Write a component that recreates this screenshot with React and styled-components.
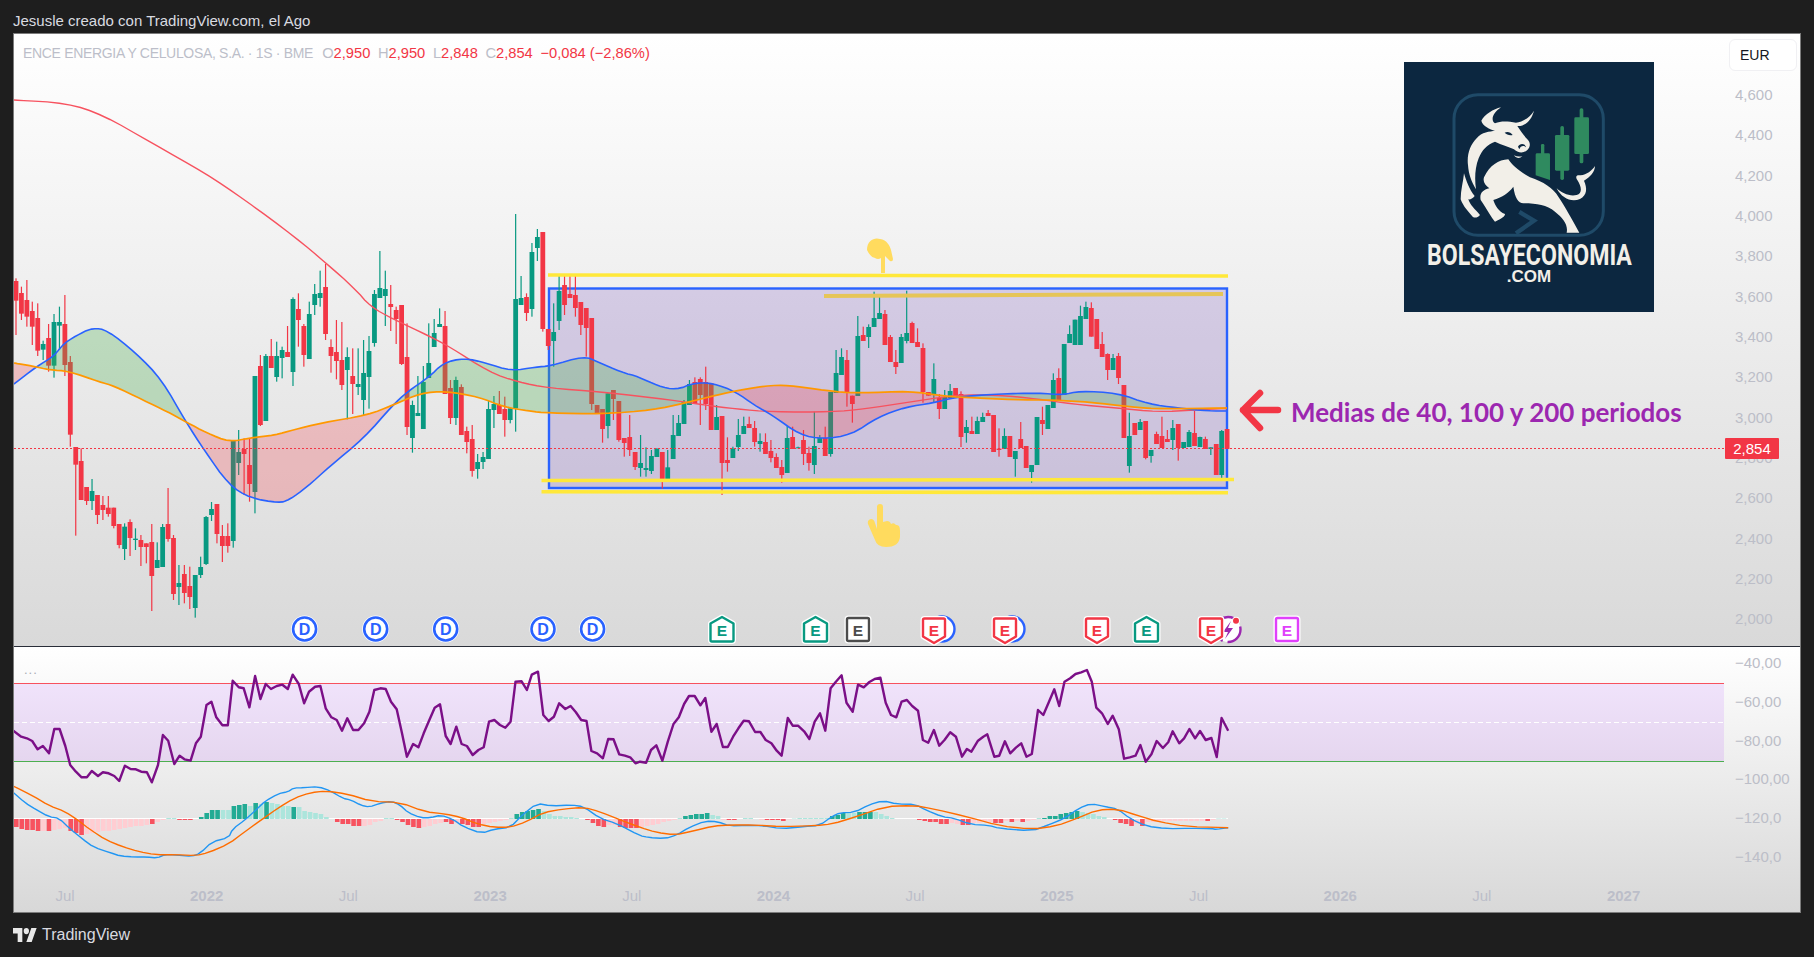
import React from 'react';
import styled, { createGlobalStyle } from 'styled-components';

const FONT = '"Liberation Sans", Arial, sans-serif';

const Global = createGlobalStyle`
  html, body { margin: 0; padding: 0; background: #1e1e1e; }
  body { font-family: ${FONT}; overflow: hidden; }
`;

const Page = styled.div`
  width: 1814px; height: 957px; background: #1e1e1e;
  display: flex; flex-direction: column;
`;
const TopBar = styled.div`
  height: 33px; padding-left: 13px; display: flex; align-items: center; padding-top: 7px; box-sizing: border-box;
  color: #d9dbe0; font-size: 15px;
`;
const Frame = styled.div`
  position: relative; width: 1788px; margin-left: 13px; height: 880px; box-sizing: border-box;
  border: 1px solid #7c7c7c; display: flex; flex-direction: column;
`;
const PriceRow = styled.div`
  position: relative; height: 612px; display: flex;
  background: linear-gradient(#ffffff, #d9d9d9);
`;
const Divider = styled.div` height: 1px; background: #2a2e39; `;
const LowerRow = styled.div`
  height: 265px; display: flex;
  background: linear-gradient(#ffffff, #d8d8d8);
`;
const PlotColumn = styled.div` width: 1710px; display: flex; flex-direction: column; `;
const PlotSvg = styled.svg` display: block; width: 1710px; height: ${p => p.$h}px; `;
const PriceAxis = styled.div`
  width: 76px; padding-top: 5px; box-sizing: border-box; display: flex; flex-direction: column; gap: 20.35px;
`;
const CurrencyBox = styled.div`
  width: 68px; height: 32px; margin-left: 5px; margin-bottom: -6.35px; box-sizing: border-box;
  background: #fff; border: 1px solid #f0f0f3; border-radius: 6px; padding-left: 10px;
  display: flex; align-items: center; color: #131722; font-size: 14px;
`;
const Tick = styled.div`
  height: 20px; line-height: 20px; padding-left: 11px; color: #bcbec8; font-size: 15px; white-space: nowrap;
`;
const OscAxis = styled(PriceAxis)` padding-top: 6px; gap: 18.8px; `;
const TimeAxis = styled.div`
  height: 31px; display: grid; grid-template-columns: repeat(12, 141.7px); margin-left: -19.85px;
`;
const TimeLabel = styled.div`
  text-align: center; line-height: 30px; color: #bcbec9; font-size: 15px;
  font-weight: ${p => (p.$year ? 700 : 400)};
`;
const Legend = styled.div`
  position: absolute; left: 9px; top: 10px; display: flex; align-items: baseline; white-space: nowrap; line-height: 18px; color: #bcbec9;
`;
const LegendTitle = styled.span` font-size: 14px; letter-spacing: -0.32px; `;
const LegendValues = styled.span` margin-left: 9px; font-size: 14.7px; `;
const LegendPair = styled.span` margin-right: 7.6px; `;
const Red = styled.span` color: #f23645; `;
const Annotation = styled.div`
  position: absolute; left: 1277px; top: 361px; color: #9c27b0; font: 700 26px/34px Lato, sans-serif; white-space: nowrap;
`;
const LastPrice = styled.div`
  position: absolute; left: 1711px; top: 404px; width: 54px; height: 21px; background: #f23645; border-radius: 1px;
  color: #fff; font-size: 15px; line-height: 21px; text-align: center;
`;
const LogoBox = styled.div`
  position: absolute; left: 1390px; top: 28px; width: 250px; height: 250px; background: #0c2740;
  display: flex; flex-direction: column; align-items: center; padding-top: 182px; box-sizing: border-box;
`;
const LogoSvg = styled.svg` position: absolute; left: 0; top: 0; width: 250px; height: 250px; display: block; `;
const LogoName = styled.div`
  height: 23px; font: 700 29px/23px Roboto, sans-serif; color: #f2efe8; white-space: nowrap;
  transform: scaleX(0.797); transform-origin: center; position: relative;
`;
const LogoDomain = styled.div`
  height: 13px; margin-top: 3px; font: 700 17px/13px "Liberation Sans", sans-serif; color: #f2efe8; white-space: nowrap; position: relative;
`;
const Dots = styled.div`
  position: absolute; left: 10px; top: 18px; color: #a8abb5; font-size: 13px; letter-spacing: 1px; line-height: 10px;
`;
const Lower = styled.div` position: relative; display: flex; `;
const Footer = styled.div`
  height: 44px; padding-left: 13px; display: flex; align-items: center; gap: 5px; color: #d9dbe0; font-size: 16px;
`;
const LetterText = styled.text`
  font-family: ${FONT}; font-weight: 700; font-size: ${p => p.$s || 15}px; text-anchor: middle; fill: ${p => p.$c};
`;

const C1 = `r 85 93 152 255|r 110 129 191 210|r 90 150 200 230|r 155 183 230 285|r 160 204 302 318|g 272 282 299 330|r 222 264 347 365|g 192 216 347 383|g 170 216 227 300|r 135 222 345 378|r 318 336 554 590|r 591 591 644 857|r 595 633 750 750|r 711 711 753 765|g 687 723 753 780|r 735 735 795 822|r 738 765 780 810|r 738 773 792 800|r 773 773 828 835|r 822 822 885 895|g 820 830 897 930|r 808 816 864 918|g 835 866 870 900|r 855 870 891 948|r 880 880 891 940|r 822 876 978 1083|g 877 930 954 954|g 822 831 951 951|r 714 822 867 875|r 855 864 1032 1050|g 945 999 1011 1065|r 945 972 1029 1060|r 950 1008 1041 1077|g 975 975 1074 1103|g 920 951 975 984|g 798 801 942 945|g 756 777 795 813|r 762 762 852 880|r 825 858 888 936|r 820 858 888 908|g 570 570 873 893|g 540 606 639 675|r 565 597 612 735|r 565 645 702 755|g 408 378 726 790|r 315 348 525 528|g 312 318 513 513|r 267 318 354 354|g 275 318 381 395|g 290 300 324 385|r 228 306 321 321|g 142 147 366 408|r 130 177 210 290|r 222 228 315 350|g 155 192 327 327|g 102 132 165 195|g 62 129 144 170|r 42 111 252 270|r 268 291 318 368|r 210 306 333 388|r 216 330 405 420|g 292 321 360 508|r 295 378 402 492|g 295 402 411 435|g 270 369 450 495|g 258 303 381 476|g 120 132 279 290|g 3 114 144 144|g 62 117 138 228|r 105 162 171 243|r 170 180 207 282|r 165 165 342 345|r 220 321 531 555|g 452 465 564 608|g 378 489 498 498|g 348 396 537 537|g 220 339 384 384|g 207 249 291 291|g 175 222 231 231|r 183 228 432 432|r 390 414 504 522|g 380 390 504 525|r 403 411 555 555|r 530 543 576 610|r 525 567 663 680|g 612 636 657 686|g 606 621 636 657|g 452 477 627 627|g 438 462 480 534|r 423 465 492 492|r 440 477 510 560|g 475 475 510 520|g -108 147 475 545|g 78 144 165 165|r 130 141 189 213|g -21 6 177 200|g -63 -39 -6 33|r -54 -54 237 245|r 237 237 288 300|g 160 246 273 350`;
const C2 = `g 165 213 303 330|r 168 195 255 285|r 165 222 234 234|r 165 225 264 290|r 246 246 315 345|r 264 264 324 410|r 294 294 552 570|r 555 555 580 580|r 567 567 627 668|g 520 520 618 655|r 510 510 537 600|r 543 543 660 665|r 654 654 669 710|r 585 651 690 708|r 696 696 741 750|g 645 729 744 770|g 682 744 750 770|g 690 708 753 762|g 685 686 711 711|r 696 696 777 806|g 690 742 777 777|g 585 645 717 717|g 585 609 648 648|g 540 546 612 612|g 480 492 555 555|r 472 486 552 552|r 472 477 525 615|r 440 486 552 570|r 490 490 630 630|g 555 591 630 630|r 588 588 729 825|r 652 720 729 755|g 680 686 714 714|g 597 645 681 693|g 590 618 642 642|r 590 612 624 624|r 603 624 666 680|g 640 663 672 695|r 640 666 702 702|r 660 693 714 727|r 700 711 744 744|r 720 741 765 788|g 618 654 759 759|r 620 651 687 687|g 680 682 684 684|r 630 660 702 735|r 680 699 729 752|g 575 678 735 762|g 645 654 669 669|r 620 654 708 708|g 516 516 702 710|g 390 459 519 519|g 385 411 465 465|r 390 420 518 560|r 527 527 552 608|g 288 348 528 528|r 320 345 363 363|g 313 321 351 384|g 215 294 321 321|g 228 279 297 297|r 270 282 375 375|r 345 351 426 426|r 390 426 441 462|g 342 351 429 429|g 212 339 363 370|r 305 309 369 369|r 325 366 381 381|r 370 384 516 548|r 516 516 527 527|g 430 477 525 548|r 522 534 567 597|g 510 531 567 567|g 492 513 534 534|r 504 504 534 534|r 514 522 651 681|g 600 621 639 668|r 590 633 642 642|g 590 603 642 642|g 578 591 606 606|r 570 579 588 588|r 585 585 696 696|r 625 686 690 710|g 625 648 687 687|r 648 648 711 711|g 693 693 717 770|r 606 657 684 684|r 678 678 744 744|g 735 735 756 788|g 591 591 735 735|r 560 600 612 645|g 555 555 627 627|g 460 480 564 564|r 445 474 540 540|g 372 372 525 525|g 316 342 369 369|g 299 299 375 375|g 257 288 375 375|g 245 261 297 297|r 247 264 350 350|r 297 297 387 387|r 336 372 411 411|r 400 402 450 480|g 402 414 450 450|r 399 408 474 492|r 495 495 654 654|g 578 648 738 758|r 609 609 645 645|g 597 606 630 630|r 603 603 714 718|g 690 690 708 728|r 635 642 672 672|r 590 648 684 684|r 630 657 666 666|g 600 624 660 690|r 612 612 684 722|g 666 666 684 684|g 630 636 681 681|r 573 639 678 678|g 650 651 681 681|r 650 657 687 687|g 682 682 687 705|r 672 672 765 765|g 630 633 765 783|r 627 627 687 687`;

const parseCandles = (s, conv) => s.split('|').map(t => {
  const [c, h, o, b, l] = t.split(' ');
  return { c, h: conv(+h), o: conv(+o), b: conv(+b), l: conv(+l) };
});
const candles = [
  ...parseCandles(C1, v => 250 + v / 3),
  ...parseCandles(C2, v => 220 + v / 3),
];
const candleX = i => 16 + i * 5.431;

const pts = (a, fx, fy) => {
  const r = [];
  for (let i = 0; i < a.length; i += 2) r.push([fx(a[i]), fy(a[i + 1])]);
  return r;
};
const toPath = p => p.map((q, i) => `${i ? 'L' : 'M'}${q[0].toFixed(1)} ${q[1].toFixed(1)}`).join('');
const chaikin = (line, n = 2) => {
  let cur = line;
  for (let k = 0; k < n; k++) {
    const next = [cur[0]];
    for (let i = 0; i < cur.length - 1; i++) {
      const [a, b] = [cur[i], cur[i + 1]];
      next.push([a[0] * 0.75 + b[0] * 0.25, a[1] * 0.75 + b[1] * 0.25]);
      next.push([a[0] * 0.25 + b[0] * 0.75, a[1] * 0.25 + b[1] * 0.75]);
    }
    next.push(cur[cur.length - 1]);
    cur = next;
  }
  return cur;
};
const valueAt = (line, x) => {
  for (let i = 1; i < line.length; i++) {
    if (x <= line[i][0]) {
      const [x0, y0] = line[i - 1], [x1, y1] = line[i];
      return x1 === x0 ? y1 : y0 + ((x - x0) / (x1 - x0)) * (y1 - y0);
    }
  }
  return line[line.length - 1][1];
};

const redMA = chaikin([[14,100],[67,103],[103,115],[152,143],[205,173],[245,200],[295,237],[326,263],[354,288],[371,307],[393,319],[429,336],[450,347],[489,372],[518,382],[548,388],[603,392],[671,400],[704,405],[736,409],[772,412],[832,412],[864,409],[910,402],[956,395],[997,395],[1039,399],[1071,404],[1117,408],[1158,412],[1195,410],[1227,408]]);
const blueMA = chaikin([[14,384],[36,367],[54,356],[64,343],[81,333],[93,328],[107,330],[136,353],[162,380],[186,422],[204,450],[229,485],[250,498],[279,503],[289,500],[307,487],[329,467],[364,438],[393,405],[407,392],[429,377],[443,363],[464,358],[486,363],[511,371],[536,367],[550,366],[584,356],[598,362],[621,372],[639,377],[658,386],[676,390],[694,383],[713,383],[736,392],[754,405],[772,415],[800,435],[823,439],[851,435],[878,417],[906,407],[933,403],[956,397],[997,394],[1039,393],[1062,395],[1080,391],[1117,393],[1149,404],[1177,408],[1209,411],[1227,411]]);
const orangeMA = chaikin([[14,363],[32,366],[50,370],[68,371],[100,382],[114,386],[143,400],[168,412],[186,422],[207,433],[229,442],[250,438],[275,435],[293,430],[321,423],[368,415],[393,405],[421,393],[446,391],[479,397],[504,407],[529,411],[548,413],[603,414],[653,410],[685,403],[717,395],[740,390],[772,385],[795,386],[837,392],[860,393],[910,391],[942,396],[979,398],[1025,400],[1053,400],[1089,402],[1131,407],[1163,409],[1227,408]]);

const buildFills = () => {
  const out = [];
  let cur = null;
  for (let x = 14; x <= 1227; x += 1) {
    const b = valueAt(blueMA, x), o = valueAt(orangeMA, x);
    const up = b <= o;
    if (!cur || cur.up !== up) {
      if (cur) out.push(cur);
      cur = { up, top: [], bot: [] };
    }
    cur.top.push([x, b]);
    cur.bot.push([x, o]);
  }
  out.push(cur);
  return out.map(s => ({ up: s.up, d: toPath([...s.top, ...s.bot.reverse()]) + 'Z' }));
};
const fills = buildFills();

const RSI_A = [32,272,52,290,66,295,79,303,92,328,105,318,120,340,133,267,146,267,160,318,172,375,186,395,200,412,213,412,225,393,240,408,252,397,266,400,280,408,292,423,306,377,320,387,333,388,346,395,360,397,372,427,387,375,399,285,412,302,427,372,440,347,452,358,467,362,480,310,492,290,506,195,518,185,530,232,545,256,558,256,570,122,585,142,597,145,611,202,625,108,638,177,651,132,664,147,678,138,692,134,705,147,717,104,732,132,745,190,757,155,772,140,785,138,798,205,812,232,825,240,838,272,851,235,865,270,878,270,892,250,905,215,917,150,932,145,945,147,958,185,972,208,985,280,997,350,1012,312,1025,322,1038,280,1050,245,1065,203,1078,193,1092,288,1104,312,1118,260,1131,312,1144,318,1158,345,1172,330,1185,322,1198,245,1211,240,1225,255,1238,263,1251,245,1263,125,1278,124,1291,150,1303,104,1318,95,1331,225,1344,243,1357,230,1370,190,1385,207,1398,198,1411,217,1424,240,1437,243,1449,333,1463,340,1477,355,1490,297,1503,298,1517,343,1531,347,1544,352,1557,370,1568,365];
const RSI_B = [15,488,27,450,40,436,55,482,68,425,82,372,95,352,108,312,120,288,134,288,148,316,160,294,175,395,188,372,203,441,215,441,228,410,241,385,254,362,267,364,282,396,295,396,308,420,322,430,335,452,347,467,362,354,374,377,387,377,402,394,415,417,428,365,441,340,454,392,467,265,480,245,494,226,506,308,521,335,534,254,548,262,562,246,575,237,589,233,602,308,615,345,628,352,641,305,654,300,667,318,681,332,693,420,706,428,720,390,733,437,746,420,760,397,774,410,789,470,801,447,812,455,828,422,841,410,851,403,868,470,880,467,894,424,907,460,921,443,934,430,947,470,960,462,975,330,988,345,1002,305,1015,268,1027,318,1040,245,1054,235,1067,222,1081,217,1095,210,1107,245,1118,323,1132,340,1146,372,1158,347,1173,388,1186,476,1200,472,1214,467,1226,435,1239,485,1253,463,1266,423,1281,444,1294,427,1305,394,1321,430,1333,415,1346,387,1360,415,1372,393,1386,420,1400,414,1413,471,1425,354,1441,392];
const fxA = x => x / 2.45, fyA = y => 640 + y / 3;
const fxB = x => 640 + x / 2.45, fyB = y => 600 + y / 3;
const rsi = [...pts(RSI_A, fxA, fyA), ...pts(RSI_B, fxB, fyB)];

const MB_A = [32,457,60,487,90,510,120,530,145,535,170,565,200,595,230,622,270,638,295,648,330,651,360,651,385,654,405,643,440,646,470,649,490,640,520,605,560,593,570,567,600,540,625,512,650,483,680,462,705,455,720,444,745,443,780,440,810,453,840,475,860,480,885,496,905,501,930,490,960,484,980,495,1000,518,1030,533,1055,533,1080,525,1110,538,1135,560,1180,580,1210,568,1250,562,1280,525,1315,490,1350,498,1400,495,1430,500,1470,535,1510,550,1568,587];
const MB_B = [20,712,60,716,90,705,120,682,160,663,190,665,220,678,260,676,300,677,345,686,400,680,440,676,470,650,490,638,525,637,560,615,595,602,630,612,675,613,700,630,740,650,770,655,810,673,855,676,880,685,960,693,1000,675,1040,655,1075,625,1105,611,1140,620,1170,627,1200,655,1240,678,1290,686,1350,685,1400,686,1412,688,1441,683];
const MO_A = [32,438,80,467,120,497,160,515,190,540,220,568,260,600,300,620,340,635,380,644,430,644,480,647,510,638,560,612,600,575,640,540,680,505,720,475,760,458,800,453,850,462,910,484,980,487,1040,515,1090,522,1130,532,1170,552,1210,562,1250,562,1290,545,1330,518,1380,507,1430,502,1470,515,1520,540,1568,562];
const MO_B = [40,697,85,705,130,693,180,678,220,675,280,675,350,680,430,677,470,672,530,650,600,620,670,616,720,627,800,650,880,677,960,688,1020,678,1070,655,1120,630,1170,627,1220,647,1270,665,1340,680,1441,683];
const macdBlue = chaikin([...pts(MB_A, fxA, fyA), ...pts(MB_B, fxB, fyB)], 1);
const macdOrange = chaikin([...pts(MO_A, fxA, fyA), ...pts(MO_B, fxB, fyB)], 1);

const HIST = `-8x -10x -11x -11x -12x -12 -12x -11 -10 -9 -12x -14x -16x -15 -14 -13 -12 -12 -11 -10 -9 -8 -7 -7 -6 -5x -3 -1 1 1 -1x -1x -1x 0 2x 6x 9x 9x 9 9 13x 14x 15x 13 16x 15 17x 16 15 13 13 12x 12 8 7 6 5 2 0 -3x -5x -5x -7x -7x -7 -6 -3 -2 1 1 -1x -3x -6x -8x -9x -8 -7 -5 -4 -3x -5x -4 -5x -6x -8x -8x -5 -4 -3 -2 -1 1 5x 7x 8x 9x 10x 8 5 3 3 2 2 1 0 -1x -4x -7x -8x -6 -6 -8x -9x -9x -9x -8 -7 -6 -5 -3 -2 -1 1 3x 4x 5x 5x 6x 4 3 -1 -1x -1x 0 1 1 0 -1 -1x -1x -1x -2x -0.5 0.5 1 1 1 1 1 1 3x 4x 6x 6 6 7x 7x 7x 7 5 3 1 0 0 0 0 -1x -2x -3x -3x -5x -5x -4 -5 -6x -6x -4 -4 -3 -3 -4x -4x -2 -3x -2 -3x -2 -1 1 1x 3x 3x 5x 6x 7x 8x 7 6 5 3 2 0 -1x -4x -5x -7x -5 -7x -3 -3 -3 -2 -2 -2 -2 -2 -2 -2 -2 -2x -1 0.5 0.5`;
const hist = HIST.split(' ').map(t => ({ v: parseFloat(t), s: t.endsWith('x') }));
const histColor = b => (b.v >= 0 ? (b.s ? '#22ab94' : '#ace5dc') : (b.s ? '#f7525f' : '#ffcdd2'));

const PRICE_TICKS = ['4,600','4,400','4,200','4,000','3,800','3,600','3,400','3,200','3,000','2,800','2,600','2,400','2,200','2,000'];
const OSC_TICKS = ['−40,00','−60,00','−80,00','−100,00','−120,0','−140,0'];
const TIME_LABELS = [['Jul'],['2022',1],['Jul'],['2023',1],['Jul'],['2024',1],['Jul'],['2025',1],['Jul'],['2026',1],['Jul'],['2027',1]];
const LEGEND = [['O','2,950'],['H','2,950'],['L','2,848'],['C','2,854']];

const DivMarker = ({ x }) => (
  <g>
    <circle cx={x} cy={629} r={13.5} fill="#fff" />
    <circle cx={x} cy={629} r={11.5} fill="#fff" stroke="#2962ff" strokeWidth={2.6} />
    <LetterText x={x} y={635} $c="#2962ff" $s={16}>D</LetterText>
  </g>
);
const HOUSE = {
  up: (x) => `M${x} 617 L${x + 11.5} 623.5 V640 Q${x + 11.5} 641.5 ${x + 10} 641.5 H${x - 10} Q${x - 11.5} 641.5 ${x - 11.5} 640 V623.5 Z`,
  down: (x) => `M${x - 9.5} 618.5 H${x + 9.5} Q${x + 11} 618.5 ${x + 11} 620 V636.5 L${x} 643 L${x - 11} 636.5 V620 Q${x - 11} 618.5 ${x - 9.5} 618.5 Z`,
  square: (x) => `M${x - 9.5} 618 H${x + 9.5} Q${x + 11} 618 ${x + 11} 619.5 V639.5 Q${x + 11} 641 ${x + 9.5} 641 H${x - 9.5} Q${x - 11} 641 ${x - 11} 639.5 V619.5 Q${x - 11} 618 ${x - 9.5} 618 Z`,
};
const EarnMarker = ({ x, kind, color }) => (
  <g>
    <path d={HOUSE[kind](x)} fill="#fff" stroke="#fff" strokeWidth={5} strokeLinejoin="round" />
    <path d={HOUSE[kind](x)} fill="#fff" stroke={color} strokeWidth={2.4} strokeLinejoin="round" />
    <LetterText x={x} y={636} $c={color} $s={15.5}>E</LetterText>
  </g>
);

const Bull = () => (
  <g transform="translate(36 28) scale(0.3333)">
    <rect x="42" y="14" width="448" height="422" rx="72" fill="none" stroke="#1f4a68" strokeWidth="9" />
    <path d="M238 366 L282 392 L228 430" fill="none" stroke="#1f4a68" strokeWidth="13" />
    <g fill="#2f8a5f">
      <rect x="303" y="162" width="10" height="40" rx="4" />
      <path d="M291 190 H326 Q330 190 330 194 V270 L287 256 V194 Q287 190 291 190 Z" />
      <rect x="361" y="108" width="11" height="162" rx="5" />
      <rect x="345" y="135" width="43" height="107" rx="4" />
      <rect x="419" y="55" width="11" height="165" rx="5" />
      <rect x="403" y="82" width="44" height="110" rx="4" />
    </g>
    <g fill="#f2efe8">
      <path d="M183 52 C160 58 135 72 124 92 C128 108 150 118 165 122 C150 125 125 125 110 145 C90 165 80 195 84 225 C86 255 95 275 108 298 C104 270 104 235 116 205 C126 180 140 165 165 155 C185 165 205 170 222 178 C232 188 250 192 262 180 C272 170 272 158 262 148 C250 135 240 120 232 108 C255 110 275 90 282 62 C270 82 250 95 228 98 C205 95 185 92 165 100 C150 90 160 68 183 52 Z" />
      <path d="M132 262 C150 225 175 210 205 208 C215 225 240 245 270 262 C310 275 340 295 355 320 C375 350 395 385 418 428 L380 428 C385 405 370 385 345 365 C320 345 290 340 250 340 C235 338 225 325 220 290 C205 310 185 322 160 330 C165 345 175 365 195 372 C195 380 185 385 165 395 C155 385 140 355 122 330 C118 310 128 300 148 295 C135 285 128 275 132 262 Z" />
      <path d="M72 250 C78 270 88 300 104 318 C98 325 90 330 85 328 C90 345 105 358 120 375 C112 384 104 384 98 380 C85 365 70 350 62 328 C62 300 70 275 72 250 Z" />
      <path d="M350 295 C365 310 390 320 410 315 C428 310 425 290 412 270 C405 258 410 254 422 256 C440 254 456 242 465 228 C465 245 450 262 432 272 C442 295 442 315 420 327 C395 338 365 325 350 295 Z" />
      <path d="M222 196 C230 200 240 201 247 198 C240 206 230 206 222 196 Z" />
    </g>
    <path d="M194 128 C203 124 212 127 218 135 C208 137 200 134 194 128 Z" fill="#0c2740" />
    <path d="M234 170 C240 158 256 160 258 172 C252 166 242 166 238 178 Z" fill="#0c2740" />
  </g>
);

export default function App() {
  return (
    <Page>
      <Global />
      <TopBar>Jesusle creado con TradingView.com, el Ago</TopBar>
      <Frame>
        <PriceRow>
          <PlotSvg $h={612} viewBox="14 34 1710 612">
            <rect x="549" y="288.5" width="678" height="199.5" fill="#673ab7" fillOpacity="0.2" stroke="#2962ff" strokeWidth="2.4" />
            {candles.map((c, i) => {
              const x = candleX(i);
              const col = c.c === 'g' ? '#089981' : '#f23645';
              return (
                <g key={i}>
                  <rect x={x - 0.6} y={c.h} width={1.2} height={Math.max(c.l - c.h, 0)} fill={col} />
                  <rect x={x - 2.4} y={c.o} width={4.8} height={Math.max(c.b - c.o, 1)} fill={col} />
                </g>
              );
            })}
            {fills.map((f, i) => (
              <path key={i} d={f.d} fill={f.up ? '#4caf50' : '#f23645'} fillOpacity={f.up ? 0.3 : 0.25} />
            ))}
            <path d={toPath(redMA)} fill="none" stroke="#f7525f" strokeWidth="1.4" />
            <path d={toPath(blueMA)} fill="none" stroke="#2962ff" strokeWidth="1.6" />
            <path d={toPath(orangeMA)} fill="none" stroke="#ff9800" strokeWidth="1.7" />
            <line x1="14" x2="1724" y1="448" y2="448" stroke="#f23645" strokeWidth="1" strokeDasharray="2 2" shapeRendering="crispEdges" />
            <line x1="548" x2="1228" y1="275" y2="276" stroke="#ffe83a" strokeWidth="3.6" />
            <line x1="824" x2="1223" y1="296" y2="294" stroke="#e6c557" strokeWidth="4" />
            <line x1="541.5" x2="1234" y1="480.5" y2="479.5" stroke="#ffe83a" strokeWidth="3.6" />
            <line x1="541.5" x2="1228" y1="491.7" y2="492.7" stroke="#ffe83a" strokeWidth="3.6" />
            <path d="M867 250 C867 240 875 237 880 239 C887 240 890 246 891 250 L893 259 Q893 262 890 261 L887 258 L885 256 L885 273 L881 273 L881 258 Q878 260 875 258 Q870 257 867 250 Z" fill="#ffdb5e" />
            <path d="M877 507 Q877 504 880 504 Q883 504 883 507 L883 522 L887 521 Q890 521 891 524 Q894 522 896 525 Q900 524 900 531 L900 537 Q899 547 886 547 Q877 547 875 540 L868 524 Q867 520 871 519 Q874 519 875 523 L877 529 Z" fill="#ffdb5e" />
            <path d="M1243 410 H1278 M1260 393 L1243 410 L1260 428" fill="none" stroke="#f23645" strokeWidth="6.5" strokeLinecap="round" strokeLinejoin="round" />
            {[304.6, 375.7, 445.7, 543, 592.6].map(x => <DivMarker key={x} x={x} />)}
            <circle cx="942" cy="629" r="12.5" fill="#fff" stroke="#2962ff" strokeWidth="2.4" />
            <circle cx="1012" cy="629" r="12.5" fill="#fff" stroke="#2962ff" strokeWidth="2.4" />
            <circle cx="1228" cy="629.5" r="12.5" fill="#fff" stroke="#9c27b0" strokeWidth="2.4" strokeDasharray="20 5" />
            <path d="M1231 621 L1223 632 H1228 L1225 639 L1233 628 H1228 Z" fill="#9c27b0" />
            <circle cx="1236" cy="620.7" r="4" fill="#fff" />
            <circle cx="1236" cy="620.7" r="3" fill="#f23645" />
            <EarnMarker x={722} kind="up" color="#089981" />
            <EarnMarker x={815.5} kind="up" color="#089981" />
            <EarnMarker x={858} kind="square" color="#4c4c4c" />
            <EarnMarker x={934} kind="down" color="#f23645" />
            <EarnMarker x={1005} kind="down" color="#f23645" />
            <EarnMarker x={1097} kind="down" color="#f23645" />
            <EarnMarker x={1146.5} kind="up" color="#089981" />
            <EarnMarker x={1211} kind="down" color="#f23645" />
            <EarnMarker x={1287} kind="square" color="#e040fb" />
          </PlotSvg>
          <PriceAxis>
            <CurrencyBox>EUR</CurrencyBox>
            {PRICE_TICKS.map(t => <Tick key={t}>{t}</Tick>)}
          </PriceAxis>
          <Legend>
            <LegendTitle>ENCE ENERGIA Y CELULOSA, S.A. · 1S · BME</LegendTitle>
            <LegendValues>
              {LEGEND.map(([k, v]) => <LegendPair key={k}>{k}<Red>{v}</Red></LegendPair>)}
              <Red>−0,084 (−2,86%)</Red>
            </LegendValues>
          </Legend>
          <Annotation>Medias de 40, 100 y 200 periodos</Annotation>
          <LastPrice>2,854</LastPrice>
          <LogoBox>
            <LogoSvg viewBox="0 0 250 250"><Bull /></LogoSvg>
            <LogoName>BOLSAYECONOMIA</LogoName>
            <LogoDomain>.COM</LogoDomain>
          </LogoBox>
        </PriceRow>
        <Divider />
        <LowerRow>
          <PlotColumn>
            <Lower>
              <PlotSvg $h={234} viewBox="14 647 1710 234">
                <defs>
                  <linearGradient id="band" x1="0" x2="0" y1="0" y2="1">
                    <stop offset="0" stopColor="#f0e3fb" />
                    <stop offset="1" stopColor="#e5d6ef" />
                  </linearGradient>
                </defs>
                <rect x="14" y="683" width="1710" height="78" fill="url(#band)" />
                <line x1="14" x2="1724" y1="683.5" y2="683.5" stroke="#f7525f" strokeWidth="1" />
                <line x1="14" x2="1724" y1="761.5" y2="761.5" stroke="#4caf50" strokeWidth="1" />
                <line x1="14" x2="1724" y1="722.5" y2="722.5" stroke="#fff" strokeWidth="1" strokeDasharray="5 3" />
                <path d={toPath(rsi)} fill="none" stroke="#7b0f87" strokeWidth="2.4" strokeLinejoin="round" />
                <line x1="14" x2="1228" y1="818.5" y2="818.5" stroke="#fff" strokeWidth="1.2" />
                {hist.map((b, i) => (
                  <rect key={i} x={14 + 5.44 * i} y={b.v >= 0 ? 819 - b.v : 819} width={4.6} height={Math.abs(b.v)} fill={histColor(b)} />
                ))}
                <path d={toPath(macdBlue)} fill="none" stroke="#2196f3" strokeWidth="1.4" />
                <path d={toPath(macdOrange)} fill="none" stroke="#ff6d00" strokeWidth="1.4" />
              </PlotSvg>
              <Dots>...</Dots>
            </Lower>
            <TimeAxis>
              {TIME_LABELS.map(([t, y], i) => <TimeLabel key={i} $year={!!y}>{t}</TimeLabel>)}
            </TimeAxis>
          </PlotColumn>
          <OscAxis>
            {OSC_TICKS.map(t => <Tick key={t}>{t}</Tick>)}
          </OscAxis>
        </LowerRow>
      </Frame>
      <Footer>
        <svg width="24" height="14" viewBox="0 4 36 18" preserveAspectRatio="none" fill="#e8e8e8">
          <path d="M14 22H7V11H0V4h14v18zM28 22h-8l7.5-18h8L28 22z" />
          <circle cx="20" cy="8" r="4" />
        </svg>
        TradingView
      </Footer>
    </Page>
  );
}
